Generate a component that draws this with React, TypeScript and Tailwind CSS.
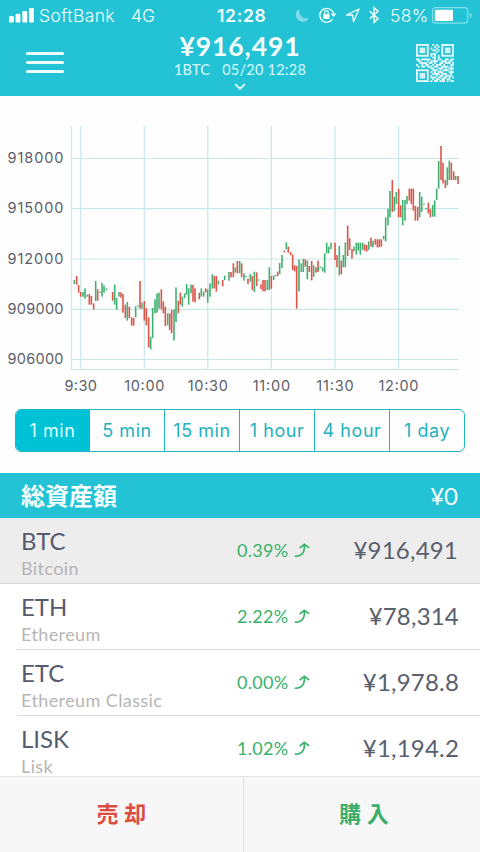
import React from "react";

type Bar = [number, number, number, "r" | "g"];

const parse = (dx: number, dy: number, src: string): Bar[] =>
  src
    .trim()
    .split(/\s+/)
    .map((t) => {
      const [x, a, b, c] = t.split(",");
      return [dx + +x / 3, dy + +a / 3, dy + +b / 3, c as "r" | "g"];
    });

// Each entry is x, high, low, direction in thirds of a pixel from the block's origin.
const bars: Bar[] = [
  ...parse(60, 240, `43,120,132,g 50,108,134,r 56,135,158,r 62,156,170,r 69,156,170,g 75,145,176,g 82,164,170,g 88,162,194,r 94,168,194,r 101,190,209,r
  107,123,183,g 113,148,182,r 120,155,159,g 126,129,170,g 132,136,158,g 139,145,151,g 158,156,182,r 164,134,194,g 170,174,209,g 177,156,170,g
  183,157,173,r 189,162,218,r 196,194,234,r 202,186,242,g 208,200,234,r 215,232,257,r 221,234,257,r 227,199,232,g 234,196,200,g 240,123,206,r
  246,188,206,g 253,183,242,r 259,205,256,r 266,232,322,r 272,290,328,g 278,204,294,g 285,178,220,g 291,160,218,g 297,158,206,g 304,148,208,r
  310,184,220,r 316,200,258,r 323,220,256,g 329,220,270,r 335,210,280,r 342,208,302,g 348,142,246,g 355,182,220,r 361,158,194,r 367,170,200,g
  374,160,174,g 380,132,164,g 386,145,194,g 393,134,160,g`),
  ...parse(190, 220, `9,195,245,r 15,205,247,r 28,218,238,r 34,205,230,g 41,215,230,g 47,205,217,r 53,208,248,g 60,190,230,g 67,163,206,g 73,168,205,r
  79,168,215,r 85,182,193,g 98,180,199,r 104,167,180,g 117,156,182,g 123,156,172,r 130,130,172,r 136,142,158,g 142,123,160,r 149,123,160,g
  155,130,172,r 162,160,182,g 168,168,171,g 174,176,192,r 181,162,185,g 187,168,210,r 193,155,216,g 200,157,198,r 206,178,182,g 213,193,207,r
  219,180,214,r 225,180,214,r 232,180,210,g 238,142,210,g 244,168,206,r 251,167,180,g 257,165,169,g 263,155,168,r 269,129,162,g 276,105,144,g
  283,92,97,r 289,67,88,g 295,80,98,r 302,96,106,r 308,104,150,r 314,136,154,r 320,138,266,r 327,118,214,g 334,130,156,g 340,117,156,g
  346,118,140,r 352,122,178,g 358,138,156,r 365,123,181,r 371,136,170,g 378,142,158,r 384,122,156,r`),
  ...parse(320, 130, `-5,412,422,g 1,410,414,g 8,412,424,g 14,370,428,g 20,338,370,g 26,350,370,g 33,338,358,g 45,338,390,r 51,375,412,r 58,348,436,g 64,392,432,r
  70,375,412,g 76,337,412,g 83,287,378,r 89,325,360,r 96,357,386,r 102,350,364,g 109,338,374,g 115,338,362,g 121,338,374,g 128,338,360,g
  134,343,362,r 140,345,365,r 146,334,360,g 153,323,350,r 159,332,352,g 166,327,344,r 172,328,352,r 178,328,352,r 184,328,350,r 191,318,328,g
  197,262,334,g 204,236,286,g 210,183,262,g 217,150,246,r 223,200,243,g 229,186,222,g 236,176,262,r 242,226,262,r 248,210,286,g 255,210,272,g
  261,198,222,g 268,176,212,r 274,176,222,r 280,176,242,r 286,228,272,r 293,230,272,r 299,186,262,g 305,200,246,g 312,220,224,g 319,234,238,g
  325,218,250,r 331,237,262,r 338,225,260,g 344,211,260,g 350,176,210,g 356,93,176,g 363,48,150,r 369,98,160,r 376,150,174,r 382,112,166,g
  388,92,150,g 394,98,150,r 401,124,150,r 407,138,150,g 414,138,162,r`),
];

const priceLabels: [string, number][] = [
  ["918000", 158.5], ["915000", 208.7], ["912000", 259], ["909000", 309.3], ["906000", 359.5],
];
const timeLabels: [string, number][] = [
  ["9:30", 80.7], ["10:00", 144.3], ["10:30", 207.8], ["11:00", 271.4], ["11:30", 335], ["12:00", 398.5],
];

function Chart() {
  return (
    <svg className="block h-[313px] w-full bg-[#fefefe] font-['Inter',sans-serif]" viewBox="0 96 480 313">
      <g stroke="#c9e8ea" strokeWidth="1.2">
        {priceLabels.map(([t, y]) => <line key={t} x1="71" x2="459" y1={y} y2={y} />)}
        {timeLabels.map(([t, x]) => <line key={t} x1={x} x2={x} y1="126" y2="370" />)}
        <path d="M71.5 126V369.5H459" fill="none" />
      </g>
      {bars.map(([x, a, b, c], i) => (
        <rect key={i} x={x - 0.8} y={a} width="1.6" height={Math.max(b - a, 1)} fill={c === "r" ? "#dc5549" : "#43b073"} />
      ))}
      <g fill="#5b5e69" fontSize="14.5">
        {priceLabels.map(([t, y]) => <text key={t} x="63.5" y={y + 4.6} textAnchor="end" textLength="56">{t}</text>)}
        {timeLabels.map(([t, x]) => (
          <text key={t} x={x} y="391" textAnchor="middle" textLength={t === "9:30" ? 32.5 : t.startsWith("11") ? 37.5 : 40}>{t}</text>
        ))}
      </g>
    </svg>
  );
}

const qr = [
  "111111100101001111111",
  "100000100010101000001",
  "101110101001001011101",
  "101110100110101011101",
  "101110100001001011101",
  "100000101110001000001",
  "111111101010101111111",
  "000000000110100000000",
  "110111110010110011011",
  "011000101111001110110",
  "001111011010011011101",
  "100101100101110100011",
  "010110111011001111010",
  "000000001100111010111",
  "111111100111010111010",
  "100000101010111000111",
  "101110100111101110010",
  "101110101001011011110",
  "101110101110110110101",
  "100000100101101101100",
  "111111101011011101011",
];

function QrIcon() {
  return (
    <svg className="mt-[44px] h-[38px] w-[38px]" viewBox="0 0 21 21" fill="#f0ffff">
      {qr.flatMap((row, y) =>
        [...row].map((v, x) => (v === "1" ? <rect key={`${x}-${y}`} x={x} y={y} width="1.03" height="1.03" /> : null)),
      )}
    </svg>
  );
}

function StatusIcons() {
  return (
    <svg className="absolute left-[290px] top-0 h-8 w-[190px]" viewBox="290 0 190 32" fill="none" stroke="#f2ffff">
      <path d="M299.6 8.8a6.9 6.9 0 1 0 9.2 9.4a7.4 7.4 0 0 1-9.2-9.4Z" fill="#7fdde8" stroke="none" />
      <path d="M332 10.6a7 7 0 1 0 .6 8.6M333.6 13.6a7 7 0 0 0-1.6-3" strokeWidth="1.3" />
      <path d="M330.8 13.4h5.6l-2.8 3.9Z" fill="#f2ffff" stroke="none" />
      <rect x="323.3" y="14" width="6.2" height="5" rx=".6" fill="#f2ffff" stroke="none" />
      <path d="M324.6 14v-1.5a1.8 1.8 0 0 1 3.6 0V14" strokeWidth="1.2" />
      <path d="M346.5 15 359 9l-5.5 12.8-.8-6.8Z" strokeWidth="1.3" strokeLinejoin="round" />
      <path d="m369.8 11.3 8.3 7.5-4 3.6V7.6l4 3.6-8.3 7.6" strokeWidth="1.5" />
      <rect x="432.6" y="7.6" width="35" height="15.6" rx="3" stroke="#83dfe8" strokeWidth="1.2" />
      <rect x="434.8" y="9.8" width="18.2" height="11.2" rx="1" fill="#fff" stroke="none" />
      <path d="M469.7 12.5c2.4 1 2.4 5 0 6Z" fill="#83dfe8" stroke="none" />
    </svg>
  );
}

function Header() {
  return (
    <header className="relative h-24 bg-[#23c2d5] text-[#f2ffff]">
      <div className="absolute inset-x-0 top-0 h-8 whitespace-nowrap font-['Inter',sans-serif] text-[17.5px] leading-8">
        <svg className="absolute left-2 top-0 h-8 w-7" viewBox="8 0 28 32" fill="#fff">
          <rect x="9" y="16" width="4.8" height="6.4" rx="1.2" />
          <rect x="15.6" y="13.8" width="4.8" height="8.6" rx="1.2" />
          <rect x="22.4" y="11" width="4.8" height="11.4" rx="1.2" />
          <rect x="29" y="8" width="4.8" height="14.4" rx="1.2" />
        </svg>
        <span className="absolute left-[39px] font-light tracking-[0.4px]">SoftBank</span>
        <span className="absolute left-[131px] font-light">4G</span>
        <span className="absolute left-[217px] font-semibold tracking-[0.7px]">12:28</span>
        <span className="absolute left-[390px] font-light tracking-[0.3px]">58%</span>
        <StatusIcons />
      </div>
      <div className="flex h-24 justify-between pl-[26px] pr-[26px]">
        <div className="mt-[52px] flex w-[38px] flex-col gap-[6px]">
          <div className="h-[3px] rounded-full bg-[#effeff]" />
          <div className="h-[3px] rounded-full bg-[#effeff]" />
          <div className="h-[3px] rounded-full bg-[#effeff]" />
        </div>
        <div className="flex flex-col items-center whitespace-nowrap pt-[31px] font-['Lato',sans-serif]">
          <div className="h-[30px] text-[26.5px] font-bold leading-[31px] tracking-[0.9px]">¥916,491</div>
          <div className="h-[18px] whitespace-pre text-[14.5px] leading-[18px] tracking-[0.25px] text-[#d9fbff]">1BTC   05/20 12:28</div>
          <svg className="mt-[4px] h-2 w-3" viewBox="0 0 12 8" fill="none" stroke="#eaffff" strokeWidth="1.8">
            <path d="m1.2 1.2 4.8 4.6 4.8-4.6" />
          </svg>
        </div>
        <QrIcon />
      </div>
    </header>
  );
}

const periods = ["1 min", "5 min", "15 min", "1 hour", "4 hour", "1 day"];

function Periods() {
  return (
    <nav className="mx-[15px] flex h-[43px] overflow-hidden rounded-[6px] border-[1.5px] border-[#22b5c3] font-['Inter',sans-serif] text-[18px]">
      {periods.map((p, i) => (
        <div
          key={p}
          className={
            "flex items-center justify-center whitespace-nowrap pb-px tracking-[0.55px] " +
            (i === 0
              ? "w-[73px] bg-[#00c2d6] text-[#dcffff]"
              : "flex-1 border-l-[1.5px] border-[#22b5c3] text-[#22b2bf]")
          }
        >
          {p}
        </div>
      ))}
    </nav>
  );
}

const coins = [
  { code: "BTC", name: "Bitcoin", pct: "0.39%", price: "¥916,491" },
  { code: "ETH", name: "Ethereum", pct: "2.22%", price: "¥78,314" },
  { code: "ETC", name: "Ethereum Classic", pct: "0.00%", price: "¥1,978.8" },
  { code: "LISK", name: "Lisk", pct: "1.02%", price: "¥1,194.2" },
];

function CoinRow({ code, name, pct, price, first }: (typeof coins)[number] & { first: boolean }) {
  return (
    <div className={first ? "bg-[#ededed]" : "bg-white pl-[17px]"}>
      <div className={"flex h-[66px] border-b border-[#d9d9d9] " + (first ? "pl-[21px] pr-[22px]" : "pl-1 pr-[21px]")}>
        <div className="w-[216px] whitespace-nowrap pt-[7px]">
          <div className="h-[31px] text-[24px] leading-[31px] text-[#565c6e]">{code}</div>
          <div className="h-[24px] text-[18px] leading-[24px] tracking-[0.4px] text-[#b5b5b5]">{name}</div>
        </div>
        <div className="flex h-[64px] w-[78px] items-center text-[18px] text-[#38b26b]">
          <span className="w-[54px] tracking-[0.3px]">{pct}</span>
          <svg className="ml-[3px] h-4 w-4 shrink-0" viewBox="0 0 16 16" fill="none" stroke="#38b26b" strokeWidth="1.7">
            <path d="M.8 14.2C7.8 14.7 10.9 10.5 10.4 2.6M5.6 6.1l4.7-3.7 4.9 3.5" />
          </svg>
        </div>
        <div className="flex h-[64px] flex-1 items-center justify-end whitespace-nowrap text-[24px] tracking-[0.2px] text-[#59606d]">
          {price}
        </div>
      </div>
    </div>
  );
}

export default function App() {
  return (
    <div className="flex h-[852px] w-[480px] flex-col overflow-hidden bg-[#fefefe] font-['Lato','Noto_Sans_CJK_JP',sans-serif]">
      <Header />
      <Chart />
      <Periods />
      <div className="mt-[21px] flex h-[45px] shrink-0 items-center justify-between bg-[#23c2d5] pl-[21px] pr-[22px] text-[24px] text-[#f4ffff]">
        <span className="font-['Noto_Sans_CJK_JP',sans-serif] font-bold leading-[43px] -mt-0.5">総資産額</span>
        <span>¥0</span>
      </div>
      <main className="h-[258px] shrink-0 overflow-hidden">
        {coins.map((c, i) => <CoinRow key={c.code} {...c} first={i === 0} />)}
      </main>
      <footer className="flex h-[76px] shrink-0 border-t border-[#e5e5e5] bg-[#f7f7f7] pb-1 font-['Noto_Sans_CJK_JP',sans-serif] text-[22px] font-bold">
        <div className="-mb-1 flex w-[244px] items-center justify-center border-r border-[#e3e3e3] pb-1 tracking-[0.4px] text-[#dc4d41]">売 却</div>
        <div className="flex flex-1 items-center justify-center pl-[4px] tracking-[0.4px] text-[#3cae6b]">購 入</div>
      </footer>
    </div>
  );
}
